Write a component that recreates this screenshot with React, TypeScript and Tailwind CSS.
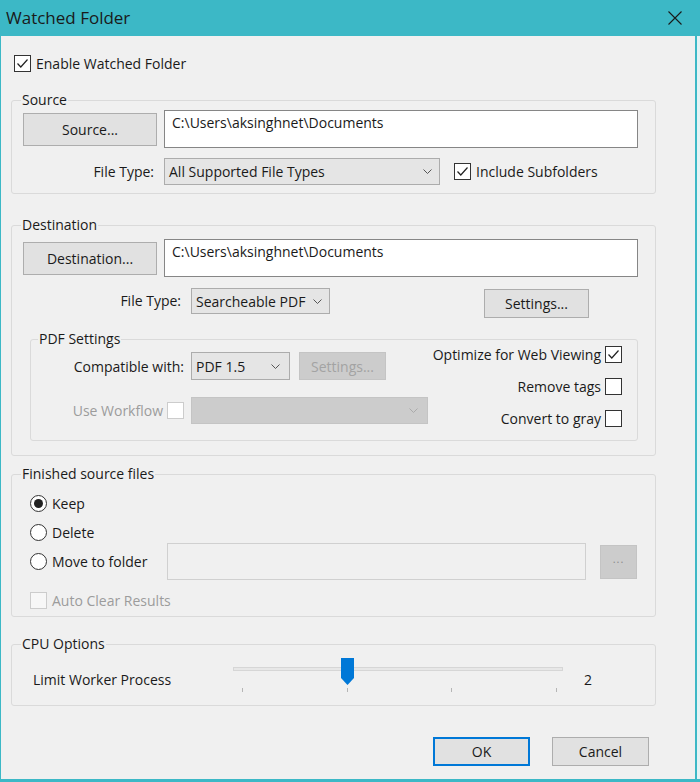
import type { ReactNode } from 'react';

const Check = ({ checked = false, disabled = false }: { checked?: boolean; disabled?: boolean }) => (
  <span
    className={
      'flex h-[17px] w-[17px] shrink-0 items-center justify-center border ' +
      (disabled ? 'border-[#cccccc] bg-[#f7f7f7]' : 'border-[#333333] bg-white')
    }
  >
    {checked && (
      <svg width="13" height="11" viewBox="0 0 13 11">
        <polyline points="1.5,5.5 4.8,9 11.5,1.5" fill="none" stroke="#222" strokeWidth="1.2" />
      </svg>
    )}
  </span>
);

const Radio = ({ checked = false }: { checked?: boolean }) => (
  <span className="flex h-[17px] w-[17px] shrink-0 items-center justify-center rounded-full border border-[#333333] bg-white">
    {checked && <span className="h-[9px] w-[9px] rounded-full bg-[#222222]" />}
  </span>
);

const Chevron = ({ color = '#555' }: { color?: string }) => (
  <svg width="9" height="5" viewBox="0 0 9 5" className="shrink-0">
    <polyline points="0.5,0.5 4.5,4.5 8.5,0.5" fill="none" stroke={color} strokeWidth="1" />
  </svg>
);

const Group = ({ label, className, children }: { label: string; className: string; children: ReactNode }) => (
  <fieldset className={'rounded-[3px] border border-[#dadada] ' + className}>
    <legend className="-ml-[2px] px-[1px] leading-[20px]">{label}</legend>
    {children}
  </fieldset>
);

const PathField = () => (
  <div className="h-[38px] w-[474px] border border-[#868686] bg-white pl-[7px] pt-[2px] leading-[20px]">
    C:\Users\aksinghnet\Documents
  </div>
);

export default function App() {
  return (
    <div className="flex h-[782px] w-[700px] flex-col bg-[#3cb8c6] font-['Segoe_UI','Open_Sans',sans-serif] text-[14px] text-[#1a1a1a]">
      <div className="flex h-[36px] shrink-0 items-center justify-between pl-[6px] pr-[18px]">
        <span className="text-[17px]">Watched Folder</span>
        <svg width="14" height="14" viewBox="0 0 14 14">
          <path d="M0.5 0.5 L13.5 13.5 M13.5 0.5 L0.5 13.5" stroke="#1a1a1a" strokeWidth="1.1" />
        </svg>
      </div>

      <div className="flex h-[743px] shrink-0">
        <div className="ml-[1px] flex w-[694px] flex-col bg-[#f0f0f0] pl-[10px]">
          <label className="mt-[18px] flex h-[18px] items-center gap-[5px] pl-[3px]">
            <Check checked />
            <span>Enable Watched Folder</span>
          </label>

          <Group label="Source" className="mt-[18px] w-[645px] px-[11px] pb-[8px]">
            <div className="flex h-[38px] items-center gap-[7px]">
              <button className="h-[33px] w-[134px] border border-[#adadad] bg-[#e1e1e1]">Source...</button>
              <PathField />
            </div>
            <div className="mt-[10px] flex h-[27px] items-center">
              <span className="w-[131px] text-right">File Type:</span>
              <div className="ml-[10px] flex h-[27px] w-[276px] items-center justify-between border border-[#acacac] bg-[#e5e5e5] pl-[4px] pr-[7px]">
                <span>All Supported File Types</span>
                <Chevron />
              </div>
              <label className="ml-[14px] flex items-center gap-[5px]">
                <Check checked />
                <span>Include Subfolders</span>
              </label>
            </div>
          </Group>

          <Group label="Destination" className="mt-[21px] w-[645px] px-[11px] pb-[14px]">
            <div className="mt-[4px] flex h-[38px] items-center gap-[7px]">
              <button className="h-[33px] w-[134px] border border-[#adadad] bg-[#e1e1e1]">Destination...</button>
              <PathField />
            </div>
            <div className="mt-[11px] flex items-start">
              <span className="w-[158px] pt-[3px] text-right leading-[20px]">File Type:</span>
              <div className="ml-[10px] flex h-[26px] w-[139px] items-center justify-between border border-[#acacac] bg-[#e5e5e5] pl-[4px] pr-[7px]">
                <span>Searcheable PDF</span>
                <Chevron />
              </div>
              <button className="ml-[154px] mt-[1px] h-[29px] w-[105px] border border-[#adadad] bg-[#e1e1e1]">
                Settings...
              </button>
            </div>

            <Group label="PDF Settings" className="ml-[7px] mt-[11px] w-[608px] pb-[13px] pl-[9px] pr-[15px]">
              <div className="flex justify-between">
                <div className="flex flex-col">
                  <div className="mt-[3px] flex h-[28px] items-center">
                    <span className="w-[144px] text-right">Compatible with:</span>
                    <div className="ml-[7px] flex h-[28px] w-[99px] items-center justify-between border border-[#acacac] bg-[#e5e5e5] pl-[4px] pr-[9px]">
                      <span>PDF 1.5</span>
                      <Chevron />
                    </div>
                    <button className="ml-[9px] h-[28px] w-[87px] border border-[#c4c4c4] bg-[#cccccc] text-[#a3a3a3]">
                      Settings...
                    </button>
                  </div>
                  <div className="mt-[17px] flex h-[27px] items-center">
                    <div className="flex w-[144px] items-center justify-end gap-[4px] text-[#9c9c9c]">
                      <span>Use Workflow</span>
                      <span className="h-[17px] w-[17px] border border-[#cccccc] bg-white" />
                    </div>
                    <div className="ml-[7px] flex h-[27px] w-[237px] items-center justify-end border border-[#c4c4c4] bg-[#cccccc] pr-[9px]">
                      <Chevron color="#aaa" />
                    </div>
                  </div>
                </div>
                <div className="-mt-[4px] flex flex-col items-end gap-[14px]">
                  {[
                    ['Optimize for Web Viewing', true],
                    ['Remove tags', false],
                    ['Convert to gray', false],
                  ].map(([text, on]) => (
                    <label key={text as string} className="flex h-[18px] items-center gap-[4px]">
                      <span>{text}</span>
                      <Check checked={on as boolean} />
                    </label>
                  ))}
                </div>
              </div>
            </Group>
          </Group>

          <Group label="Finished source files" className="mt-[8px] w-[645px] px-[11px] pb-[6px]">
            <label className="mt-[9px] flex h-[20px] items-center gap-[5px] pl-[7px]">
              <Radio checked />
              <span>Keep</span>
            </label>
            <label className="mt-[9px] flex h-[20px] items-center gap-[5px] pl-[7px]">
              <Radio />
              <span>Delete</span>
            </label>
            <div className="mt-[1px] flex h-[37px] items-center pl-[7px]">
              <label className="flex w-[137px] items-center gap-[5px]">
                <Radio />
                <span>Move to folder</span>
              </label>
              <div className="h-[37px] w-[419px] border border-[#d0d0d0] bg-[#f0f0f0]" />
              <button className="ml-[14px] h-[34px] w-[37px] border border-[#c4c4c4] bg-[#cccccc] pb-[4px] text-[11px] tracking-[1px] text-[#8a8a8a]">
                ...
              </button>
            </div>
            <label className="mt-[10px] flex h-[20px] items-center gap-[5px] pl-[7px] text-[#9c9c9c]">
              <Check disabled />
              <span>Auto Clear Results</span>
            </label>
          </Group>

          <Group label="CPU Options" className="mt-[17px] w-[645px] px-[11px] pb-[13px]">
            <div className="mt-[4px] flex items-start">
              <span className="mt-[12px] w-[210px] pl-[10px] leading-[20px]">Limit Worker Process</span>
              <div className="relative h-[34px] w-[330px]">
                <div className="absolute left-0 right-0 top-[9px] h-[4px] border border-[#d6d6d6] bg-[#e7e7e7]" />
                <svg className="absolute left-[108px] top-0" width="13" height="27" viewBox="0 0 13 27">
                  <path d="M0 0 H13 V20 L6.5 27 L0 20 Z" fill="#0078d7" />
                </svg>
                {[9, 114, 218, 323].map((x) => (
                  <span key={x} className="absolute top-[30px] h-[4px] w-[1px] bg-[#b5b5b5]" style={{ left: x }} />
                ))}
              </div>
              <span className="ml-[21px] mt-[12px] leading-[20px]">2</span>
            </div>
          </Group>

          <div className="ml-[422px] mt-[31px] flex gap-[22px]">
            <button className="h-[29px] w-[97px] border-2 border-[#0078d7] bg-[#e1e1e1]">OK</button>
            <button className="h-[29px] w-[97px] border border-[#adadad] bg-[#e1e1e1]">Cancel</button>
          </div>
        </div>
        <div className="w-[2px] bg-[#3cb8c6]" />
        <div className="w-[3px] bg-[#e4f3f5]" />
      </div>
    </div>
  );
}
